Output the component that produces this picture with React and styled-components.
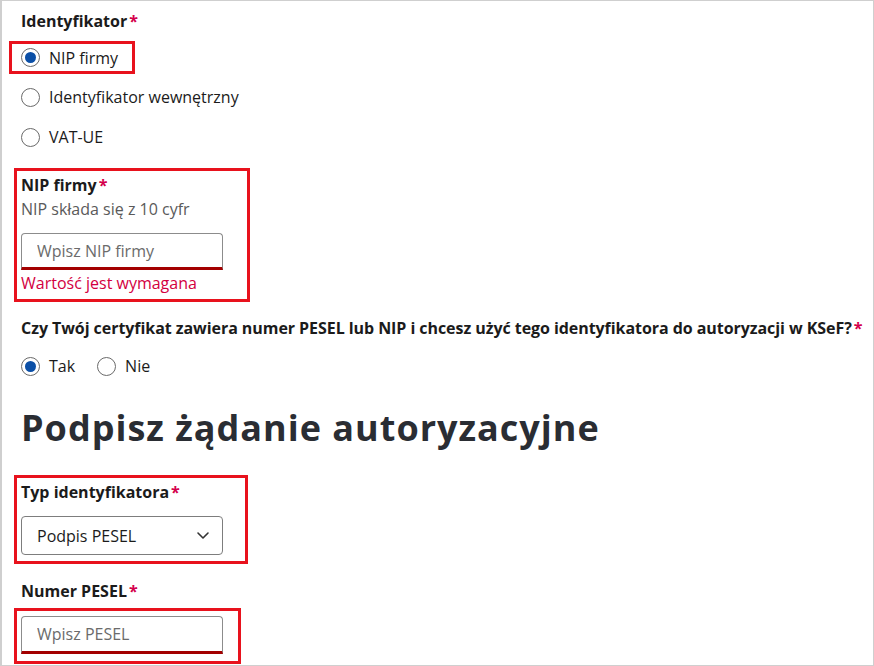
import React from "react";
import styled, { createGlobalStyle } from "styled-components";

const Global = createGlobalStyle`
  html, body { margin: 0; padding: 0; background: #fff; }
  body { font-family: "Open Sans", "Noto Sans", sans-serif; color: #1b1b1b; }
  * { box-sizing: border-box; }
`;

const Frame = styled.div`
  width: 874px;
  height: 666px;
  border: 1px solid #cfcfcf;
  border-left-width: 2px;
  padding: 8px 0 0 19px;
  overflow: hidden;
  display: flex;
  flex-direction: column;
  align-items: flex-start;
`;

const Label = styled.div`
  font-size: 16px;
  font-weight: 700;
  line-height: 24px;
  color: #1b1b1b;
  margin-top: ${(p) => p.$mt || 0}px;
  letter-spacing: ${(p) => p.$ls || 0}px;
  white-space: nowrap;
`;

const Req = styled.span`
  color: #d4004b;
  margin-left: 2px;
`;

const Hint = styled.div`
  font-size: 16px;
  line-height: 24px;
  color: #5a5a5a;
`;

const ErrorText = styled.div`
  font-size: 16px;
  line-height: 24px;
  color: #d3003f;
  margin-top: 1px;
`;

const Highlight = styled.div`
  border: 3px solid #e8121d;
  margin-top: ${(p) => p.$mt || 0}px;
  margin-left: -${(p) => p.$ml}px;
  padding: ${(p) => p.$pad};
  display: flex;
  flex-direction: column;
  align-items: flex-start;
`;

const RadioGroup = styled.div`
  display: flex;
  flex-direction: ${(p) => (p.$row ? "row" : "column")};
  gap: ${(p) => (p.$row ? "22px" : "0")};
  margin-top: ${(p) => p.$mt || 0}px;
`;

const RadioRow = styled.label`
  display: flex;
  align-items: center;
  height: ${(p) => p.$h || 40}px;
  font-size: 16px;
  color: #1b1b1b;
  cursor: pointer;
`;

const Circle = styled.span`
  width: 19px;
  height: 19px;
  border-radius: 50%;
  border: 1.5px solid #6a6a6a;
  display: inline-flex;
  align-items: center;
  justify-content: center;
  margin-right: 9px;
  flex: none;
  &::after {
    content: "";
    width: 11px;
    height: 11px;
    border-radius: 50%;
    background: ${(p) => (p.$checked ? "#0b4fa6" : "transparent")};
  }
`;

const Input = styled.input`
  width: 202px;
  height: ${(p) => p.$h || 37}px;
  margin-top: ${(p) => p.$mt || 0}px;
  border: 1px solid #8c8c8c;
  border-bottom: 3px solid #a30000;
  border-radius: 4px 4px 0 0;
  padding: 0 0 0 15px;
  font-family: inherit;
  font-size: 16px;
  color: #1b1b1b;
  background: #fff;
  outline: none;
  &::placeholder { color: #6b6b6b; }
`;

const Select = styled.div`
  width: 202px;
  height: 39px;
  margin-top: 12px;
  border: 1px solid #7d7d7d;
  border-radius: 4px;
  display: flex;
  align-items: center;
  justify-content: space-between;
  padding: 0 12px 0 15px;
  font-size: 16px;
  color: #1b1b1b;
`;

const Heading = styled.h2`
  margin: 20px 0 0;
  font-family: "Open Sans", "Noto Sans", sans-serif;
  font-size: 36px;
  line-height: 44px;
  letter-spacing: 1px;
  font-weight: 700;
  color: #2a2d33;
  white-space: nowrap;
`;

function Radio({ label, checked, h }) {
  return (
    <RadioRow $h={h}>
      <Circle $checked={checked} />
      {label}
    </RadioRow>
  );
}

export default function App() {
  return (
    <>
      <Global />
      <Frame>
        <Label>Identyfikator<Req>*</Req></Label>
        <Highlight $mt={8} $ml={12} $pad="0 14px 0 9px">
          <Radio label="NIP firmy" checked h={27} />
        </Highlight>
        <RadioGroup $mt={3}>
          <Radio label="Identyfikator wewnętrzny" />
          <Radio label="VAT-UE" />
        </RadioGroup>

        <Highlight $mt={11} $ml={7} $pad="2px 24px 4px 4px">
          <Label>NIP firmy<Req>*</Req></Label>
          <Hint>NIP składa się z 10 cyfr</Hint>
          <Input $mt={12} placeholder="Wpisz NIP firmy" />
          <ErrorText>Wartość jest wymagana</ErrorText>
        </Highlight>

        <Label $mt={14} $ls={-0.06}>
          Czy Twój certyfikat zawiera numer PESEL lub NIP i chcesz użyć tego identyfikatora do autoryzacji w KSeF?<Req>*</Req>
        </Label>
        <RadioGroup $row $mt={6}>
          <Radio label="Tak" checked />
          <Radio label="Nie" />
        </RadioGroup>

        <Heading>Podpisz żądanie autoryzacyjne</Heading>

        <Highlight $mt={25} $ml={7} $pad="2px 22px 6px 4px">
          <Label>Typ identyfikatora<Req>*</Req></Label>
          <Select>
            Podpis PESEL
            <svg width="14" height="9" viewBox="0 0 14 9" fill="none">
              <path d="M2 2l5 5 5-5" stroke="#333" strokeWidth="1.6" strokeLinecap="round" strokeLinejoin="round" />
            </svg>
          </Select>
        </Highlight>

        <Label $mt={15}>Numer PESEL<Req>*</Req></Label>
        <Highlight $mt={5} $ml={7} $pad="5px 15px 7px 4px">
          <Input $h={38} placeholder="Wpisz PESEL" />
        </Highlight>
      </Frame>
    </>
  );
}
